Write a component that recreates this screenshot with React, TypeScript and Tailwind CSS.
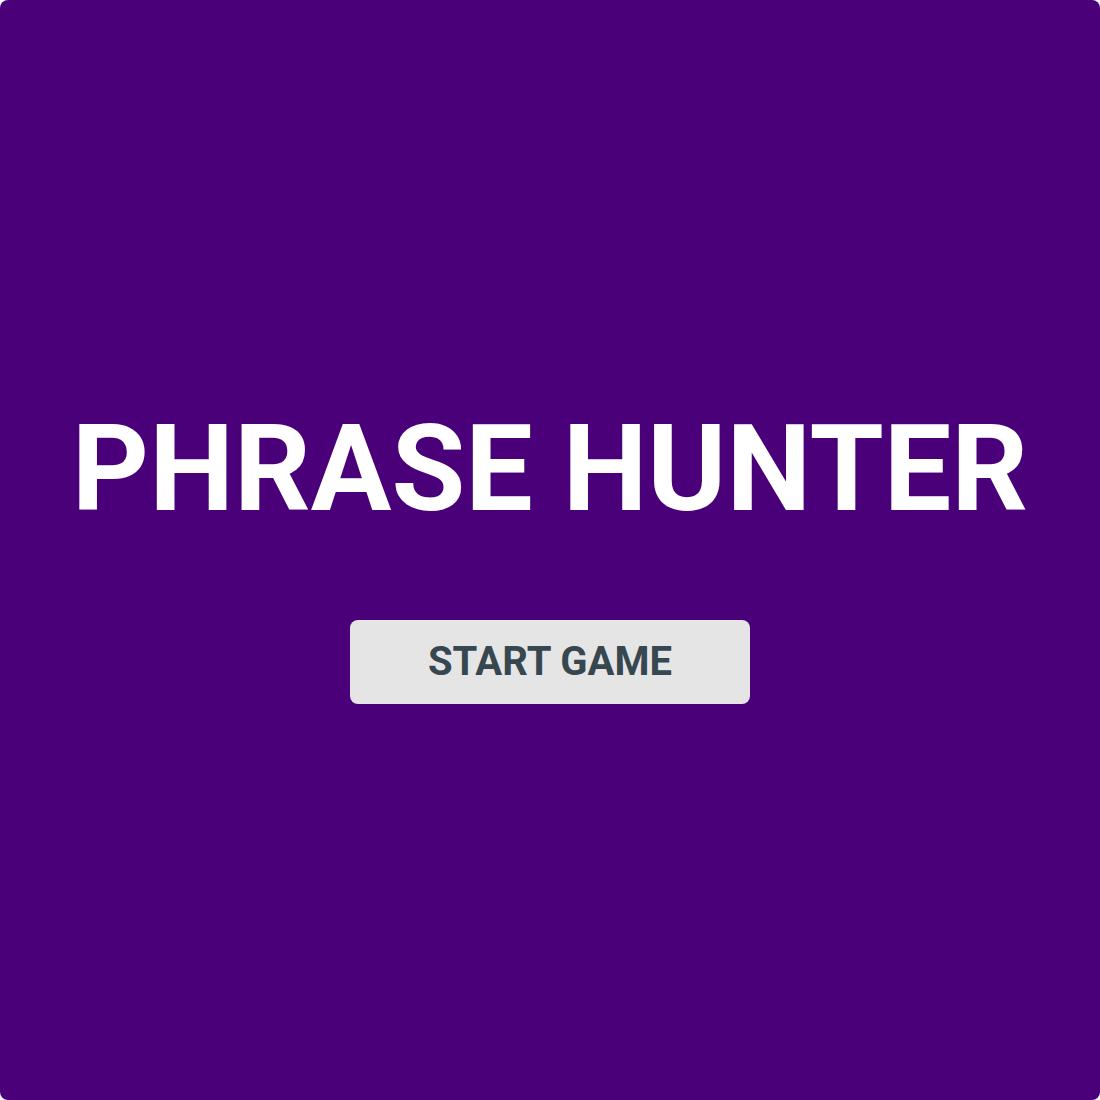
export default function App() {
  return (
    <div className="w-[1100px] h-[1100px] bg-[#4a0079] rounded-lg flex flex-col items-center pt-[409px] font-['Roboto',_'Liberation_Sans',_sans-serif]">
      <h1 className="text-[120px] leading-none font-bold text-white">PHRASE HUNTER</h1>
      <button className="mt-[91px] w-[400px] h-[84px] rounded-lg bg-[#e5e5e5] text-[#37474f] text-[40px] font-bold leading-none">
        START GAME
      </button>
    </div>
  );
}
